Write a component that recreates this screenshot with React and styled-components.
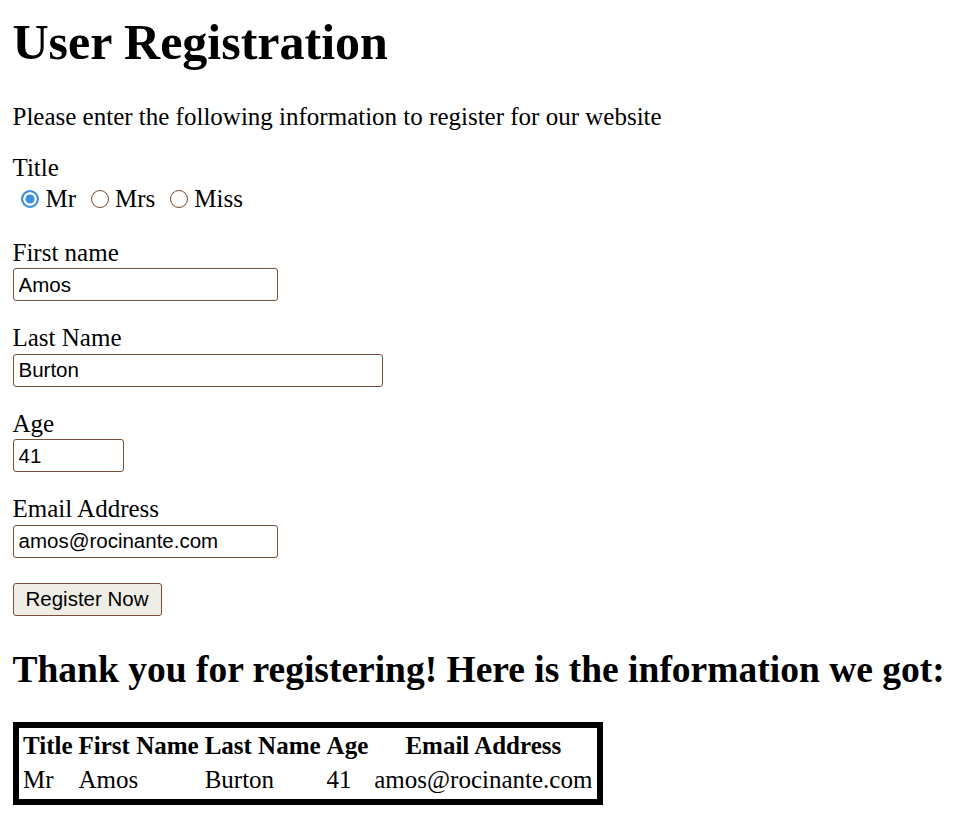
import styled, { createGlobalStyle } from "styled-components";

const GlobalStyle = createGlobalStyle`
  body {
    margin: 0;
    background: #ffffff;
    color: #000000;
    font-family: "Liberation Serif", "Times New Roman", serif;
    font-size: 25px;
  }
`;

const Page = styled.div`
  padding: 13px 12.5px 0;
`;

const PageTitle = styled.h1`
  font-size: 50px;
  font-weight: 700;
  margin: 0 0 32px;
  line-height: normal;
`;

const Intro = styled.p`
  margin: 0 0 23px;
`;

const FieldLabel = styled.label`
  display: block;
  line-height: normal;
`;

const RadioRow = styled.div`
  display: flex;
  align-items: center;
  gap: 14.5px;
  height: 28.7px;
  padding-left: 8.5px;
  margin: 3px 0 25px;
`;

const RadioOption = styled.label`
  display: flex;
  align-items: center;
  gap: 6.5px;
`;

const Radio = styled.input`
  appearance: none;
  box-sizing: border-box;
  width: 18px;
  height: 18px;
  margin: 0;
  border-radius: 50%;
  border: 1.5px solid #6f4b35;
  background: #ffffff;

  &:checked {
    border: 2px solid #3a8fdf;
    background: #3a8fdf;
    box-shadow: inset 0 0 0 2.5px #ffffff;
  }
`;

const Field = styled.div`
  display: flex;
  flex-direction: column;
  align-items: flex-start;
  gap: 1.5px;
  margin-bottom: 23px;
`;

const TextInput = styled.input`
  box-sizing: border-box;
  width: ${(p) => p.$width}px;
  height: 33px;
  margin: 0;
  padding: 0 5px;
  border: 1px solid #75503a;
  border-radius: 3px;
  font-family: "Liberation Sans", Arial, sans-serif;
  font-size: 20.5px;
  color: #000000;
  background: #ffffff;
`;

const SubmitButton = styled.button`
  box-sizing: border-box;
  height: 33px;
  margin: 2px 0 0;
  padding: 0 12px;
  border: 1px solid #75503a;
  border-radius: 3px;
  background: #efeee6;
  font-family: "Liberation Sans", Arial, sans-serif;
  font-size: 20.5px;
  color: #000000;
`;

const ResultTitle = styled.h2`
  font-size: 37.5px;
  font-weight: 700;
  margin: 32px 0 31px;
  line-height: normal;
  white-space: nowrap;
`;

const ResultTable = styled.table`
  border: 6px solid #000000;
  border-spacing: 3px;
  font-size: 25px;

  th,
  td {
    padding: 1.5px;
    line-height: normal;
  }

  td {
    text-align: left;
  }
`;

const user = {
  title: "Mr",
  firstName: "Amos",
  lastName: "Burton",
  age: "41",
  email: "amos@rocinante.com",
};

export default function App() {
  return (
    <Page>
      <GlobalStyle />
      <PageTitle>User Registration</PageTitle>
      <Intro>Please enter the following information to register for our website</Intro>
      <form onSubmit={(e) => e.preventDefault()}>
        <FieldLabel>Title</FieldLabel>
        <RadioRow>
          {["Mr", "Mrs", "Miss"].map((t) => (
            <RadioOption key={t}>
              <Radio type="radio" name="title" value={t} defaultChecked={t === user.title} />
              {t}
            </RadioOption>
          ))}
        </RadioRow>
        <Field>
          <FieldLabel htmlFor="first">First name</FieldLabel>
          <TextInput id="first" $width={265} defaultValue={user.firstName} />
        </Field>
        <Field>
          <FieldLabel htmlFor="last">Last Name</FieldLabel>
          <TextInput id="last" $width={370} defaultValue={user.lastName} />
        </Field>
        <Field>
          <FieldLabel htmlFor="age">Age</FieldLabel>
          <TextInput id="age" $width={111} defaultValue={user.age} />
        </Field>
        <Field>
          <FieldLabel htmlFor="email">Email Address</FieldLabel>
          <TextInput id="email" $width={265} defaultValue={user.email} />
        </Field>
        <SubmitButton type="submit">Register Now</SubmitButton>
      </form>
      <ResultTitle>Thank you for registering! Here is the information we got:</ResultTitle>
      <ResultTable>
        <thead>
          <tr>
            <th>Title</th>
            <th>First Name</th>
            <th>Last Name</th>
            <th>Age</th>
            <th>Email Address</th>
          </tr>
        </thead>
        <tbody>
          <tr>
            <td>{user.title}</td>
            <td>{user.firstName}</td>
            <td>{user.lastName}</td>
            <td>{user.age}</td>
            <td>{user.email}</td>
          </tr>
        </tbody>
      </ResultTable>
    </Page>
  );
}
